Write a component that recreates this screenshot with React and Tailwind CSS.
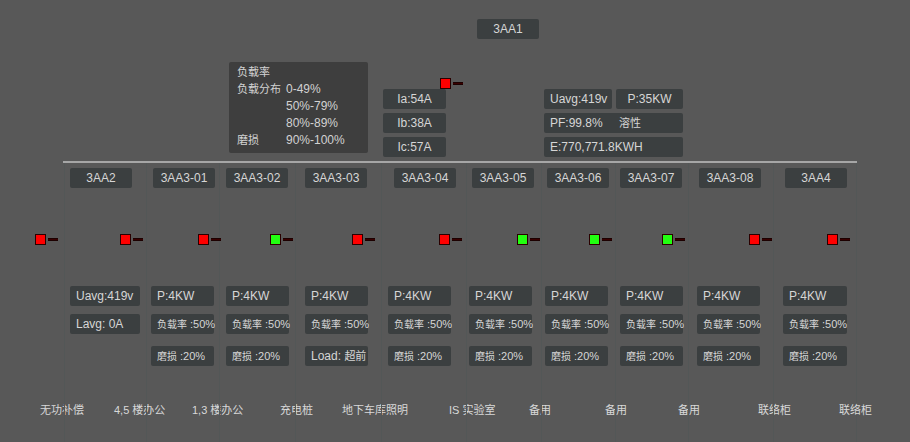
const font = "font-['Liberation_Sans','Noto_Sans_CJK_SC',sans-serif]";

const columns = [
  { w: "w-[64px]", border: "", label: null, lx: "", sx: "ml-[35px]", ok: false, bx: "", boxes: [], tx: "ml-[40px]", text: "无功补偿" },
  { w: "w-[82px]", border: "border-l", label: "3AA2", lx: "ml-[5px]", sx: "ml-[55px]", ok: false, bx: "ml-[5px] w-[70px]", boxes: ["Uavg:419v", "Lavg: 0A"], tx: "ml-[49px]", text: "4,5 楼办公" },
  { w: "w-[73px]", border: "border-l", label: "3AA3-01", lx: "ml-[6px]", sx: "ml-[51px]", ok: false, bx: "ml-[4px] w-[63px]", boxes: ["P:4KW", "负载率 :50%", "磨损 :20%"], tx: "ml-[45px]", text: "1,3 楼办公" },
  { w: "w-[76px]", border: "border-l", label: "3AA3-02", lx: "ml-[6px]", sx: "ml-[50px]", ok: true, bx: "ml-[6px] w-[63px]", boxes: ["P:4KW", "负载率 :50%", "磨损 :20%"], tx: "ml-[60px]", text: "充电桩" },
  { w: "w-[86px]", border: "border-l", label: "3AA3-03", lx: "ml-[9px]", sx: "ml-[56px]", ok: false, bx: "ml-[9px] w-[63px]", boxes: ["P:4KW", "负载率 :50%", "Load: 超前"], tx: "ml-[46px]", text: "地下车库照明" },
  { w: "w-[85px]", border: "border-l", label: "3AA3-04", lx: "ml-[12px]", sx: "ml-[57px]", ok: false, bx: "ml-[6px] w-[63px]", boxes: ["P:4KW", "负载率 :50%", "磨损 :20%"], tx: "ml-[67px]", text: "IS 实验室" },
  { w: "w-[75px]", border: "border-l", label: "3AA3-05", lx: "ml-[5px]", sx: "ml-[50px]", ok: true, bx: "ml-[2px] w-[63px]", boxes: ["P:4KW", "负载率 :50%", "磨损 :20%"], tx: "ml-[62px]", text: "备用" },
  { w: "w-[74px]", border: "border-l", label: "3AA3-06", lx: "ml-[5px]", sx: "ml-[47px]", ok: true, bx: "ml-[3px] w-[63px]", boxes: ["P:4KW", "负载率 :50%", "磨损 :20%"], tx: "ml-[63px]", text: "备用" },
  { w: "w-[73px]", border: "border-l", label: "3AA3-07", lx: "ml-[4px]", sx: "ml-[46px]", ok: true, bx: "ml-[4px] w-[63px]", boxes: ["P:4KW", "负载率 :50%", "磨损 :20%"], tx: "ml-[62px]", text: "备用" },
  { w: "w-[85px]", border: "border-l", label: "3AA3-08", lx: "ml-[10px]", sx: "ml-[60px]", ok: false, bx: "ml-[8px] w-[63px]", boxes: ["P:4KW", "负载率 :50%", "磨损 :20%"], tx: "ml-[69px]", text: "联络柜" },
  { w: "w-[84px]", border: "border-l border-r", label: "3AA4", lx: "ml-[11px]", sx: "ml-[53px]", ok: false, bx: "ml-[9px] w-[64px]", boxes: ["P:4KW", "负载率 :50%", "磨损 :20%"], tx: "ml-[65px]", text: "联络柜" },
];

const boxTops = ["mt-0", "mt-[8px]", "mt-[12px]"];

const Status = ({ ok, className = "" }) => (
  <div className={`relative z-10 flex items-center w-max h-[11px] ${className}`}>
    <div className={`w-[11px] h-[11px] shrink-0 border border-[#2a0000] ${ok ? "bg-[#22ff11]" : "bg-[#ff0000]"}`} />
    <div className="ml-[2px] w-[10px] h-[3px] shrink-0 bg-[#3a0000] border-y border-[#1c0000]" />
  </div>
);

const Tag = ({ children, className = "" }) => (
  <div className={`h-[20px] flex items-center justify-center rounded-[2px] bg-[#3b3f40] text-[12px] text-[#d6d6d6] whitespace-nowrap ${className}`}>
    {children}
  </div>
);

const InfoBox = ({ children, className = "" }) => (
  <div className={`h-[20px] flex items-center pl-[6px] rounded-[2px] bg-[#3b3f40] text-[12px] text-[#d6d6d6] whitespace-pre ${className}`}>
    {children}
  </div>
);

const Cjk = ({ children, className = "text-[11px]" }) => <span className={className}>{children}</span>;

// split mixed text so the Chinese part gets the smaller size
const renderBox = (txt) => {
  const m = txt.match(/^([^\x00-\x7f]+)(.*)$/);
  if (m) return (<span><Cjk className="text-[10px]">{m[1]}</Cjk><span className="text-[11px]">{m[2]}</span></span>);
  const m2 = txt.match(/^(.*?)([^\x00-\x7f]+)$/);
  if (m2) return (<span>{m2[1]}<Cjk>{m2[2]}</Cjk></span>);
  return <span>{txt}</span>;
};

export default function App() {
  return (
    <div className={`w-[910px] h-[442px] bg-[#585858] overflow-hidden ${font}`}>
      <div className="h-[161px] flex flex-col">
        <Tag className="mt-[19px] ml-[477px] w-[62px]">3AA1</Tag>

        <div className="mt-[23px] flex items-start">
          <div className="ml-[229px] w-[139px] h-[91px] shrink-0 rounded-[2px] bg-[#3e3e3e] pt-[2px] pl-[8px] text-[12px] leading-[17px] text-[#d2d2d2]">
            <div className="flex"><span className="w-[49px] text-[11px]">负载率</span></div>
            <div className="flex"><span className="w-[49px] text-[11px]">负载分布</span><span>0-49%</span></div>
            <div className="flex"><span className="w-[49px]" /><span>50%-79%</span></div>
            <div className="flex"><span className="w-[49px]" /><span>80%-89%</span></div>
            <div className="flex"><span className="w-[49px] text-[11px]">磨损</span><span>90%-100%</span></div>
          </div>

          <div className="ml-[15px] mt-[16px] w-[63px] shrink-0 flex flex-col">
            <Status ok={false} className="ml-[57px]" />
            <Tag className="w-[63px]">Ia:54A</Tag>
            <Tag className="w-[63px] mt-[4px]">Ib:38A</Tag>
            <Tag className="w-[63px] mt-[4px]">Ic:57A</Tag>
          </div>

          <div className="ml-[98px] mt-[27px] flex flex-col w-[139px] shrink-0">
            <div className="flex">
              <InfoBox className="w-[68px]">Uavg:419v</InfoBox>
              <Tag className="ml-[4px] w-[67px]">P:35KW</Tag>
            </div>
            <InfoBox className="mt-[4px]">
              <span className="w-[69px]">PF:99.8%</span><Cjk>溶性</Cjk>
            </InfoBox>
            <InfoBox className="mt-[4px]">E:770,771.8KWH</InfoBox>
          </div>
        </div>
      </div>

      <div className="ml-[63px] w-[794px] h-[2px] bg-[#a6a6a6]" />

      <div className="flex h-[279px]">
        {columns.map((col, i) => (
          <div key={i} className={`${col.w} ${col.border} border-[#535757] shrink-0 flex flex-col`}>
            <div className="h-[25px] pt-[5px]">
              {col.label && <Tag className={`${col.lx} w-[62px]`}>{col.label}</Tag>}
            </div>
            <Status ok={col.ok} className={`mt-[46px] ${col.sx}`} />
            <div className={`mt-[41px] h-[80px] flex flex-col ${col.bx}`}>
              {col.boxes.map((b, j) => (
                <InfoBox key={j} className={`${boxTops[j]} pl-[4px]`}>{renderBox(b)}</InfoBox>
              ))}
            </div>
            <div className={`mt-[37px] h-[14px] leading-[14px] text-[11px] text-[#d8d8d8] whitespace-nowrap ${col.tx}`}>
              {col.text}
            </div>
          </div>
        ))}
      </div>
    </div>
  );
}
